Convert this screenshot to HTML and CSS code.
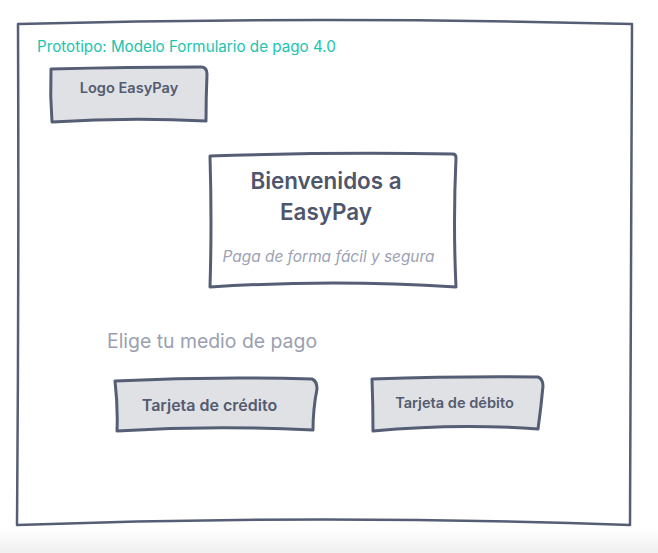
FILE: index.html
```html
<!DOCTYPE html>
<html lang="es">
<head>
    <meta charset="UTF-8">
    <meta name="viewport" content="width=device-width, initial-scale=1.0">
    <title>EasyPay - Prototipo</title>
    <link rel="stylesheet" href="styles.css">
</head>
<body>
    <div class="frame">
        <svg class="sketch" viewBox="0 0 616 505" preserveAspectRatio="none">
            <path d="M1,2 Q308,-6 615,2 Q613,250 613,503 Q308,492 0,503 Q2,250 1,2 Z" fill="#fff"/>
        </svg>

        <p class="proto-title">Prototipo: Modelo Formulario de pago 4.0</p>

        <div class="box logo-box">
            <svg class="sketch" viewBox="0 0 158 57" preserveAspectRatio="none">
                <path d="M1,3 Q80,1 151,1 Q157,1 157,8 Q156,32 156,55 Q80,51 2,56 Q0,30 1,3 Z" fill="#e0e1e5"/>
            </svg>
            <span class="box-label">Logo EasyPay</span>
        </div>

        <div class="box welcome-box">
            <svg class="sketch" viewBox="0 0 248 137" preserveAspectRatio="none">
                <path d="M1,3 Q120,-1 244,1 Q247,1 247,5 Q244,70 247,134 Q124,126 1,134 Q3,70 1,3 Z" fill="#fff"/>
            </svg>
            <h1 class="welcome-title">Bienvenidos a<br>EasyPay</h1>
            <p class="tagline">Paga de forma fácil y segura</p>
        </div>

        <p class="choose">Elige tu medio de pago</p>

        <div class="methods">
            <button class="box method credit">
                <svg class="sketch" viewBox="0 0 203 55" preserveAspectRatio="none">
                    <path d="M1,4 Q100,-1 198,2 Q203,4 203,12 Q199,32 199,53 Q100,48 3,54 Q4,30 1,4 Z" fill="#e0e1e5"/>
                </svg>
                <span class="box-label">Tarjeta de crédito</span>
            </button>
            <button class="box method debit">
                <svg class="sketch" viewBox="0 0 173 56" preserveAspectRatio="none">
                    <path d="M1,4 Q90,1 167,2 Q172,4 172,11 Q170,33 167,54 Q85,48 2,56 Q2,30 1,4 Z" fill="#e0e1e5"/>
                </svg>
                <span class="box-label">Tarjeta de débito</span>
            </button>
        </div>
    </div>
</body>
</html>
```

FILE: styles.css
```css
html, body {
    height: 100%;
}
body {
    margin: 0;
    font-family: 'Inter', 'Noto Sans', sans-serif;
    color: #545b70;
    background: linear-gradient(to bottom, #fff 0, #fff 528px, #f0f0f0 553px);
}
.frame {
    position: relative;
    box-sizing: border-box;
    width: 616px;
    height: 505px;
    margin: 22px 0 0 17px;
    padding: 16px 0 0 20px;
}
.sketch {
    position: absolute;
    top: 0;
    left: 0;
    width: 100%;
    height: 100%;
    overflow: visible;
    z-index: 0;
}
.sketch path {
    stroke: #565e75;
    stroke-width: 3;
    stroke-linejoin: round;
    vector-effect: non-scaling-stroke;
}
.frame > .sketch path {
    stroke-width: 2.5;
}
.proto-title {
    position: relative;
    margin: 0;
    font-size: 15.2px;
    line-height: 17px;
    color: #22c3ad;
}
.box {
    position: relative;
    box-sizing: border-box;
}
.box > :not(.sketch) {
    position: relative;
    z-index: 1;
}
.box-label {
    font-weight: 600;
    color: #545b70;
}
.logo-box {
    width: 158px;
    height: 57px;
    margin: 11px 0 0 13px;
    padding-top: 14px;
    text-align: center;
    font-size: 14.6px;
    line-height: 17px;
}
.welcome-box {
    width: 248px;
    height: 137px;
    margin: 30px 0 0 172px;
    padding: 12px 14px 0 0;
    text-align: center;
}
.welcome-title {
    margin: 0;
    font-size: 22.4px;
    line-height: 31px;
    font-weight: 600;
    color: #4f566b;
}
.tagline {
    margin: 21px 0 0 5px;
    font-size: 15.4px;
    line-height: 17px;
    font-style: italic;
    color: #9ca1b3;
}
.choose {
    position: relative;
    margin: 40px 0 0 70px;
    font-size: 19.4px;
    line-height: 23px;
    color: #9aa0b2;
}
.methods {
    position: relative;
    display: flex;
    align-items: flex-start;
    gap: 54px;
    margin: 24px 0 0 77px;
}
.method {
    display: flex;
    align-items: center;
    justify-content: center;
    border: none;
    background: none;
    padding: 0;
    font-family: inherit;
    cursor: pointer;
}
.credit {
    width: 203px;
    height: 55px;
    padding-right: 12px;
    font-size: 16px;
}
.debit {
    width: 173px;
    height: 56px;
    margin-top: -2px;
    padding-right: 6px;
    font-size: 14.6px;
}
```
